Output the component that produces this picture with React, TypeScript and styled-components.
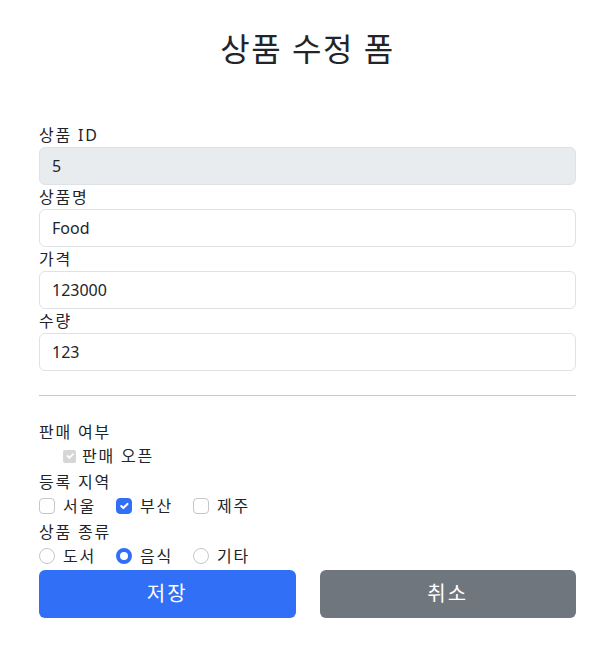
import React from "react";
import styled, { createGlobalStyle } from "styled-components";

const Global = createGlobalStyle`
  html, body { margin: 0; padding: 0; background: #fff; }
  body {
    font-family: "Noto Sans", "Noto Sans CJK KR", sans-serif;
    font-size: 16px;
    line-height: 1.5;
    color: #212529;
  }
  * { box-sizing: border-box; }
`;

const Container = styled.div`
  width: 561px;
  margin: 0 auto;
  padding: 0 12px;
`;

const Header = styled.div`
  text-align: center;
  padding: 30px 0 55px;
`;

const Title = styled.h2`
  margin: 0;
  font-size: 32px;
  font-weight: 400;
  line-height: 1.2;
  letter-spacing: 1.5px;
`;

const Field = styled.div``;

const Label = styled.label`
  display: block;
  line-height: 24px;
  height: 24px;
  letter-spacing: 1.8px;
`;

const Input = styled.input<{ $disabled?: boolean }>`
  display: block;
  width: 100%;
  height: 38px;
  padding: 6px 12px;
  font: inherit;
  color: #212529;
  background: ${(p) => (p.$disabled ? "#e9ecef" : "#fff")};
  border: 1px solid #dee2e6;
  border-radius: 6px;
  outline: none;
`;

const Divider = styled.hr`
  margin: 24px 0;
  border: 0;
  border-top: 1px solid rgba(33, 37, 41, 0.25);
`;

const Row = styled.div<{ $indent?: boolean }>`
  display: flex;
  align-items: center;
  height: 24px;
  margin-bottom: 2px;
  padding-left: ${(p) => (p.$indent ? "24px" : "0")};
  letter-spacing: 1.8px;
`;

const Option = styled.label`
  display: inline-flex;
  align-items: center;
  gap: 8px;
  margin-right: 20px;
`;

const NativeBox = styled.span`
  width: 13px;
  height: 13px;
  border-radius: 2px;
  background: #d6d6d6;
  display: inline-flex;
  align-items: center;
  justify-content: center;
  margin-right: 6px;
`;

const Box = styled.span<{ $on?: boolean; $round?: boolean }>`
  width: 16px;
  height: 16px;
  border-radius: ${(p) => (p.$round ? "50%" : "4px")};
  border: ${(p) =>
    p.$on ? (p.$round ? "4.5px solid #316ff6" : "1px solid #316ff6") : "1px solid #c4c7ca"};
  background: ${(p) => (p.$on ? (p.$round ? "#fff" : "#316ff6") : "#fff")};
  display: inline-flex;
  align-items: center;
  justify-content: center;
  flex-shrink: 0;
`;

const Buttons = styled.div`
  display: grid;
  grid-template-columns: 1fr 1fr;
  column-gap: 24px;
  margin-top: 1px;
`;

const Button = styled.button<{ $variant: "primary" | "secondary" }>`
  height: 48px;
  border: 0;
  border-radius: 6px;
  font: inherit;
  font-size: 20px;
  letter-spacing: 2px;
  color: #fff;
  background: ${(p) => (p.$variant === "primary" ? "#316ff6" : "#6f767e")};
  cursor: pointer;
`;

const Check = ({ color = "#fff", size = 10 }: { color?: string; size?: number }) => (
  <svg width={size} height={size} viewBox="0 0 20 20">
    <path d="M6 10l3 3l6-6" fill="none" stroke={color} strokeWidth="3" strokeLinecap="round" strokeLinejoin="round" />
  </svg>
);

const regions = [
  { name: "서울", on: false },
  { name: "부산", on: true },
  { name: "제주", on: false },
];
const types = [
  { name: "도서", on: false },
  { name: "음식", on: true },
  { name: "기타", on: false },
];

export default function App() {
  return (
    <>
      <Global />
      <Container>
        <Header>
          <Title>상품 수정 폼</Title>
        </Header>
        <Field>
          <Label>상품 ID</Label>
          <Input $disabled readOnly value="5" />
        </Field>
        <Field>
          <Label>상품명</Label>
          <Input readOnly value="Food" />
        </Field>
        <Field>
          <Label>가격</Label>
          <Input readOnly value="123000" />
        </Field>
        <Field>
          <Label>수량</Label>
          <Input readOnly value="123" />
        </Field>
        <Divider />
        <Label>판매 여부</Label>
        <Row $indent>
          <NativeBox>
            <Check size={12} />
          </NativeBox>
          판매 오픈
        </Row>
        <Label>등록 지역</Label>
        <Row>
          {regions.map((r) => (
            <Option key={r.name}>
              <Box $on={r.on}>{r.on && <Check size={14} />}</Box>
              {r.name}
            </Option>
          ))}
        </Row>
        <Label>상품 종류</Label>
        <Row>
          {types.map((r) => (
            <Option key={r.name}>
              <Box $round $on={r.on} />
              {r.name}
            </Option>
          ))}
        </Row>
        <Buttons>
          <Button $variant="primary">저장</Button>
          <Button $variant="secondary">취소</Button>
        </Buttons>
      </Container>
    </>
  );
}
